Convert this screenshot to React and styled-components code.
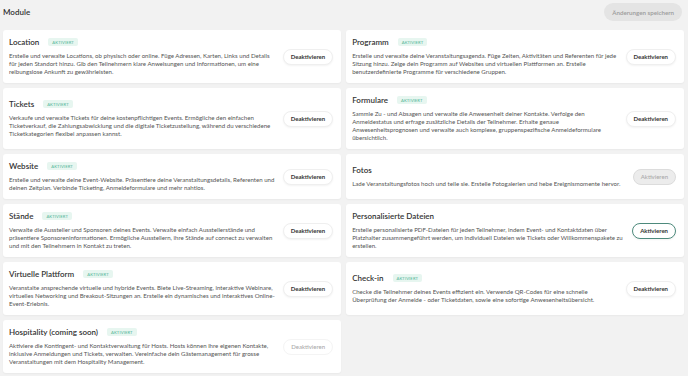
import styled, { createGlobalStyle } from "styled-components";

const modules = [
  {
    title: "Location",
    active: true,
    lines: [
      "Erstelle und verwalte Locations, ob physisch oder online. Füge Adressen, Karten, Links und Details",
      "für jeden Standort hinzu. Gib den Teilnehmern klare Anweisungen und Informationen, um eine",
      "reibungslose Ankunft zu gewährleisten.",
    ],
  },
  {
    title: "Programm",
    active: true,
    lines: [
      "Erstelle und verwalte deine Veranstaltungsagenda. Füge Zeiten, Aktivitäten und Referenten für jede",
      "Sitzung hinzu. Zeige dein Programm auf Websites und virtuellen Plattformen an. Erstelle",
      "benutzerdefinierte Programme für verschiedene Gruppen.",
    ],
  },
  {
    title: "Tickets",
    active: true,
    lines: [
      "Verkaufe und verwalte Tickets für deine kostenpflichtigen Events. Ermögliche den einfachen",
      "Ticketverkauf, die Zahlungsabwicklung und die digitale Ticketzustellung, während du verschiedene",
      "Ticketkategorien flexibel anpassen kannst.",
    ],
  },
  {
    title: "Formulare",
    active: true,
    lines: [
      "Sammle Zu - und Absagen und verwalte die Anwesenheit deiner Kontakte. Verfolge den",
      "Anmeldestatus und erfrage zusätzliche Details der Teilnehmer. Erhalte genaue",
      "Anwesenheitsprognosen und verwalte auch komplexe, gruppenspezifische Anmeldeformulare",
      "übersichtlich.",
    ],
  },
  {
    title: "Website",
    active: true,
    lines: [
      "Erstelle und verwalte deine Event-Website. Präsentiere deine Veranstaltungsdetails, Referenten und",
      "deinen Zeitplan. Verbinde Ticketing, Anmeldeformulare und mehr nahtlos.",
    ],
  },
  {
    title: "Fotos",
    active: false,
    disabled: true,
    lines: [
      "Lade Veranstaltungsfotos hoch und teile sie. Erstelle Fotogalerien und hebe Ereignismomente hervor.",
    ],
  },
  {
    title: "Stände",
    active: true,
    lines: [
      "Verwalte die Aussteller und Sponsoren deines Events. Verwalte einfach Ausstellerstände und",
      "präsentiere Sponsoreninformationen. Ermögliche Ausstellern, ihre Stände auf connect zu verwalten",
      "und mit den Teilnehmern in Kontakt zu treten.",
    ],
  },
  {
    title: "Personalisierte Dateien",
    active: false,
    lines: [
      "Erstelle personalisierte PDF-Dateien für jeden Teilnehmer, indem Event- und Kontaktdaten über",
      "Platzhalter zusammengeführt werden, um individuell Dateien wie Tickets oder Willkommenspakete zu",
      "erstellen.",
    ],
  },
  {
    title: "Virtuelle Plattform",
    active: true,
    lines: [
      "Veranstalte ansprechende virtuelle und hybride Events. Biete Live-Streaming, interaktive Webinare,",
      "virtuelles Networking und Breakout-Sitzungen an. Erstelle ein dynamisches und interaktives Online-",
      "Event-Erlebnis.",
    ],
  },
  {
    title: "Check-in",
    active: true,
    lines: [
      "Checke die Teilnehmer deines Events effizient ein. Verwende QR-Codes für eine schnelle",
      "Überprüfung der Anmelde - oder Ticketdaten, sowie eine sofortige Anwesenheitsübersicht.",
    ],
  },
  {
    title: "Hospitality (coming soon)",
    active: true,
    disabled: true,
    lines: [
      "Aktiviere die Kontingent- und Kontaktverwaltung für Hosts. Hosts können ihre eigenen Kontakte,",
      "inklusive Anmeldungen und Tickets, verwalten. Vereinfache dein Gästemanagement für grosse",
      "Veranstaltungen mit dem Hospitality Management.",
    ],
  },
];

const ModuleCard = ({ title, active, disabled, lines }) => (
  <Card>
    <Body>
      <TitleRow>
        <Title>{title}</Title>
        {active && <Badge>Aktiviert</Badge>}
      </TitleRow>
      <Description>
        {lines.map((line) => (
          <Line key={line}>{line}</Line>
        ))}
      </Description>
    </Body>
    <ToggleButton $active={active} $disabled={disabled} disabled={disabled}>
      {active ? "Deaktivieren" : "Aktivieren"}
    </ToggleButton>
  </Card>
);

const App = () => (
  <>
    <GlobalStyle />
    <Page>
      <Header>
        <Heading>Module</Heading>
        <SaveButton disabled>Änderungen speichern</SaveButton>
      </Header>
      <Grid>
        {modules.map((m) => (
          <ModuleCard key={m.title} {...m} />
        ))}
      </Grid>
    </Page>
  </>
);

export default App;

const GlobalStyle = createGlobalStyle`
  body {
    margin: 0;
    background: #f2f2f2;
    font-family: Lato, "Noto Sans", sans-serif;
    color: #333;
  }
`;

const Page = styled.div`
  padding: 3px 4px 3px 3px;
`;

const Header = styled.header`
  display: flex;
  justify-content: space-between;
  align-items: center;
  height: 18px;
  margin-bottom: 9px;
`;

const Heading = styled.h1`
  margin: 0;
  font-size: 8px;
  font-weight: 600;
  color: #333;
`;

const SaveButton = styled.button`
  height: 18px;
  margin-right: 2px;
  padding: 0 8px;
  border: none;
  border-radius: 9px;
  background: #e4e4e4;
  color: #9a9a9a;
  font-family: inherit;
  font-size: 6.2px;
  font-weight: 600;
`;

const Grid = styled.div`
  display: grid;
  grid-template-columns: 1fr 1fr;
  gap: 5px 5px;
`;

const Card = styled.div`
  display: flex;
  align-items: center;
  gap: 8px;
  padding: 7px 8px 7px 6px;
  background: #fff;
  border-radius: 3px;
  box-shadow: 0 1px 2px rgba(0, 0, 0, 0.04);
`;

const Body = styled.div`
  flex: 1;
  min-width: 0;
  display: flex;
  flex-direction: column;
  gap: 5px;
`;

const TitleRow = styled.div`
  display: flex;
  align-items: center;
  gap: 9px;
  height: 10px;
`;

const Title = styled.h2`
  margin: 0;
  font-size: 8px;
  font-weight: 600;
  color: #333;
`;

const Badge = styled.span`
  padding: 1.5px 4px;
  border-radius: 2px;
  background: #e7f6f0;
  color: #4fb597;
  font-size: 4.2px;
  text-transform: uppercase;
  letter-spacing: 0.1px;
`;

const Description = styled.p`
  margin: 0;
  font-size: 6.1px;
  line-height: 8px;
  color: #555;
`;

const Line = styled.span`
  display: block;
  white-space: nowrap;
`;

const ToggleButton = styled.button`
  flex-shrink: 0;
  height: 16px;
  padding: 0 7px;
  border-radius: 8px;
  font-family: inherit;
  font-size: 6px;
  background: ${(p) => (p.$disabled && !p.$active ? "#ececec" : "#fff")};
  color: ${(p) => (p.$disabled ? "#aaa" : "#333")};
  border: 1px solid
    ${(p) =>
      p.$disabled
        ? p.$active
          ? "#f4f4f4"
          : "#dcdcdc"
        : p.$active
        ? "#efefef"
        : "#4d8a7c"};
  box-shadow: ${(p) =>
    p.$disabled ? "none" : "0 1px 2px rgba(0, 0, 0, 0.05)"};
  font-weight: ${(p) => (p.$disabled ? 500 : 700)};
`;
